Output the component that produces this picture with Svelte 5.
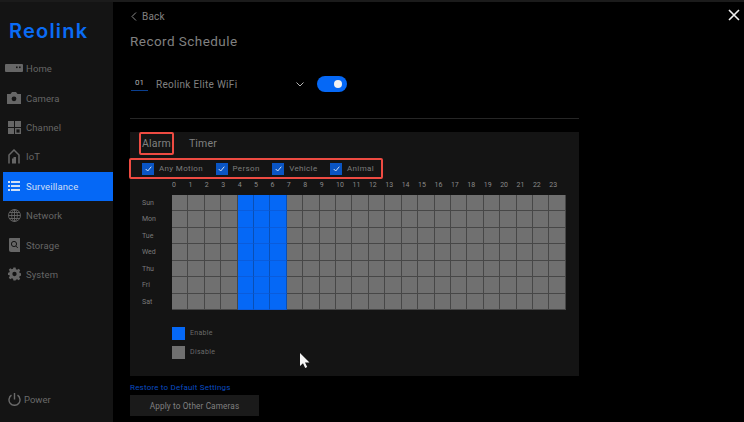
<script>
    const navItems = ['Home', 'Camera', 'Channel', 'IoT', 'Surveillance', 'Network', 'Storage', 'System'];
    const filters = ['Any Motion', 'Person', 'Vehicle', 'Animal'];
    const days = ['Sun', 'Mon', 'Tue', 'Wed', 'Thu', 'Fri', 'Sat'];
    const hours = Array.from({ length: 24 }, (_, i) => i);

    // 4 to 6 o'clock are enabled on every day
    const isOn = (h) => h >= 4 && h <= 6;
</script>

<div class="screen">
    <aside class="sidebar">
        <div class="logo">Reolink</div>
        <nav>
            {#each navItems as item}
                <div class="nav-item" class:active={item === 'Surveillance'}>
                    <span class="nav-icon">
                        {#if item === 'Home'}
                            <svg width="18" height="9" viewBox="0 0 18 9"><path d="M1 0h16a1 1 0 0 1 1 1v6a1 1 0 0 1-1 1H1a1 1 0 0 1-1-1V1a1 1 0 0 1 1-1z" fill="currentColor"/><rect x="11" y="2.500" width="1.600" height="1.600" fill="#141414"/><rect x="14" y="2.500" width="1.600" height="1.600" fill="#141414"/></svg>
                        {:else if item === 'Camera'}
                            <svg width="14" height="12" viewBox="0 0 14 12"><path d="M0 2h3.500L5 0h4l1.500 2H14v10H0z" fill="currentColor"/><circle cx="7" cy="6.800" r="2.400" fill="#141414"/></svg>
                        {:else if item === 'Channel'}
                            <svg width="13" height="13" viewBox="0 0 13 13"><rect width="6" height="6" fill="currentColor"/><rect x="7" width="6" height="6" fill="currentColor"/><rect y="7" width="6" height="6" fill="currentColor"/><rect x="7.700" y="7.700" width="4.600" height="4.600" fill="none" stroke="currentColor" stroke-width="1.400"/></svg>
                        {:else if item === 'IoT'}
                            <svg width="12" height="15" viewBox="0 0 12 15"><path d="M1 14.500V6l5-5 5 5v8.500" fill="none" stroke="currentColor" stroke-width="1.500"/><path d="M4 14.500V9.500h1.500V8H8v6.500z" fill="currentColor"/></svg>
                        {:else if item === 'Surveillance'}
                            <svg width="12" height="10" viewBox="0 0 12 10"><g fill="currentColor"><rect width="2" height="2"/><rect x="3" width="9" height="2"/><rect y="4" width="2" height="2"/><rect x="3" y="4" width="9" height="2"/><rect y="8" width="2" height="2"/><rect x="3" y="8" width="9" height="2"/></g></svg>
                        {:else if item === 'Network'}
                            <svg width="13" height="13" viewBox="0 0 13 13" fill="none" stroke="currentColor" stroke-width="0.900"><circle cx="6.500" cy="6.500" r="6"/><ellipse cx="6.500" cy="6.500" rx="2.800" ry="6"/><path d="M6.500 .5v12M.5 6.500h12M1.400 3.500h10.200M1.400 9.500h10.200"/></svg>
                        {:else if item === 'Storage'}
                            <svg width="11" height="14" viewBox="0 0 11 14"><path d="M1 0h10v14H2a2 2 0 0 1-2-2V1a1 1 0 0 1 1-1z" fill="currentColor"/><circle cx="5" cy="6" r="2.600" fill="none" stroke="#141414" stroke-width="1"/><path d="M6.800 8l2 2" stroke="#141414" stroke-width="1"/></svg>
                        {:else}
                            <svg width="13" height="14" viewBox="0 0 24 24"><path fill="currentColor" fill-rule="evenodd" d="M10 0h4l.7 3.400 2.200.9 2.900-1.900 2.800 2.800-1.900 2.900.9 2.200 3.400.7v4l-3.400.7-.9 2.200 1.900 2.900-2.800 2.800-2.900-1.900-2.200.9L14 24h-4l-.7-3.400-2.200-.9-2.900 1.900-2.800-2.800 1.900-2.900-.9-2.200L-1 14v-4l3.400-.7.9-2.200-1.900-2.900 2.800-2.800 2.900 1.900 2.200-.9zM12 8a4 4 0 1 0 0 8 4 4 0 0 0 0-8z"/></svg>
                        {/if}
                    </span>
                    <span>{item}</span>
                </div>
            {/each}
        </nav>
        <div class="power">
            <svg width="13" height="13" viewBox="0 0 13 13" fill="none" stroke="currentColor" stroke-width="1.400"><path d="M6.500 0v6.500"/><path d="M3.500 2.200a5.500 5.500 0 1 0 6 0"/></svg>
            <span>Power</span>
        </div>
    </aside>

    <main>
        <div class="back">
            <svg width="6" height="9" viewBox="0 0 6 9" fill="none" stroke="#8a8a8a" stroke-width="1"><path d="M5 .5 1 4.500l4 4"/></svg>
            <span>Back</span>
        </div>
        <h1>Record Schedule</h1>

        <div class="camera-row">
            <span class="channel">01</span>
            <span class="camera-name">Reolink Elite WiFi</span>
            <svg class="chevron" width="8" height="5" viewBox="0 0 8 5" fill="none" stroke="#b5b5b5" stroke-width="1"><path d="M.5.5 4 4 7.500.5"/></svg>
            <span class="toggle"><span class="knob"></span></span>
        </div>

        <div class="divider"></div>

        <section class="panel">
            <div class="tabs">
                <span class="tab alarm">Alarm</span>
                <span class="tab">Timer</span>
            </div>

            <div class="filters">
                {#each filters as f}
                    <div class="filter">
                        <span class="check">
                            <svg width="7" height="6" viewBox="0 0 7 6" fill="none" stroke="#cfe0f7" stroke-width="1"><path d="M.7 3l2 2L6.300.7"/></svg>
                        </span>
                        <span>{f}</span>
                    </div>
                {/each}
            </div>

            <div class="schedule">
                <div class="corner"></div>
                {#each hours as h}
                    <div class="hour">{h}</div>
                {/each}
                {#each days as d}
                    <div class="day">{d}</div>
                    {#each hours as h}
                        <div class="cell" class:on={isOn(h)}></div>
                    {/each}
                {/each}
            </div>

            <div class="legend">
                <div class="legend-row"><span class="swatch on"></span><span>Enable</span></div>
                <div class="legend-row"><span class="swatch"></span><span>Disable</span></div>
            </div>
        </section>

        <div class="restore">Restore to Default Settings</div>
        <button>Apply to Other Cameras</button>
    </main>

    <svg class="close" width="12" height="12" viewBox="0 0 12 12" stroke="#f0f0f0" stroke-width="1.600"><path d="M1 1l10 10M11 1 1 11"/></svg>
    <svg class="cursor" width="10" height="16" viewBox="0 0 10 16"><path d="M0 0v13l3-2.800L5.200 15l2-.9L5 9.500h4.500z" fill="#f5f5f5"/></svg>
</div>

<style>
    :global(body) {
        background: #000;
    }

    .screen {
        position: relative;
        display: flex;
        width: 744px;
        height: 422px;
        overflow: hidden;
        background: #000;
        border-top: 2px solid #1b1b1b;
        box-sizing: border-box;
        font-family: Roboto, "Liberation Sans", sans-serif;
    }

    .sidebar {
        display: flex;
        flex-direction: column;
        width: 113px;
        flex: none;
        background: #141414;
        padding-left: 3px;
        box-sizing: border-box;
    }

    .logo {
        height: 35px;
        margin: 17px 0 0 6px;
        color: #0a6cf5;
        font-family: Inter, sans-serif;
        font-size: 20px;
        font-weight: 600;
        line-height: 24px;
        letter-spacing: 1.200px;
    }

    nav {
        display: flex;
        flex-direction: column;
    }

    .nav-item {
        display: flex;
        align-items: center;
        height: 29.4px;
        color: #666;
        font-size: 9.500px;
        letter-spacing: 0.1px;
    }

    .nav-item.active {
        background: #0568f6;
        color: #cfdff5;
    }

    .nav-icon {
        display: flex;
        justify-content: center;
        width: 22px;
        margin-right: 1px;
    }

    .power {
        display: flex;
        align-items: center;
        gap: 3px;
        margin: auto 0 16px 5px;
        color: #6a6a6a;
        font-size: 9.500px;
    }

    main {
        display: flex;
        flex-direction: column;
        width: 449px;
        margin-left: 17px;
    }

    .back {
        display: flex;
        align-items: center;
        gap: 5px;
        margin-top: 7px;
        height: 14px;
        padding-left: 1px;
        color: #808080;
        font-size: 10px;
        letter-spacing: 0.2px;
    }

    h1 {
        margin: 9px 0 0;
        color: #808080;
        font-size: 13.500px;
        font-weight: 400;
        line-height: 18px;
        letter-spacing: 0.45px;
    }

    .camera-row {
        display: flex;
        align-items: center;
        height: 18px;
        margin-top: 25px;
    }

    .channel {
        width: 17px;
        margin-left: 1px;
        padding-bottom: 2px;
        border-bottom: 1px solid #0a3f90;
        color: #b0b0b0;
        font-size: 8px;
        line-height: 11px;
        text-align: center;
        box-sizing: border-box;
    }

    .camera-name {
        width: 140px;
        margin-left: 8px;
        color: #808080;
        font-size: 10px;
        letter-spacing: 0.3px;
    }

    .toggle {
        display: flex;
        align-items: center;
        justify-content: flex-end;
        width: 30px;
        height: 16px;
        margin-left: 13px;
        padding-right: 5px;
        border-radius: 8px;
        background: #0568f6;
        box-sizing: border-box;
    }

    .knob {
        width: 8px;
        height: 8px;
        border-radius: 50%;
        background: #f2f2f2;
    }

    .divider {
        height: 1px;
        margin-top: 25px;
        background: #262626;
    }

    .panel {
        height: 244px;
        margin-top: 13px;
        padding-left: 12px;
        background: #141414;
        box-sizing: border-box;
    }

    .tabs {
        display: flex;
        align-items: center;
        gap: 15px;
        height: 23px;
    }

    .tab {
        color: #808080;
        font-size: 10.500px;
        letter-spacing: 0.2px;
    }

    .alarm {
        margin-left: -3px;
        padding: 3px 1px;
        border: 2px solid #ee4b42;
        border-radius: 2px;
    }

    .filters {
        display: flex;
        align-items: center;
        width: 254px;
        height: 21px;
        margin: 3px 0 0 -13px;
        padding-left: 11px;
        border: 2px solid #ee4b42;
        border-radius: 2px;
        box-sizing: border-box;
        gap: 12.500px;
    }

    .filter {
        display: flex;
        align-items: center;
        gap: 5px;
        color: #7c7c7c;
        font-size: 8px;
        letter-spacing: 0.35px;
    }

    .check {
        display: flex;
        align-items: center;
        justify-content: center;
        width: 12px;
        height: 12px;
        background: #0a55c4;
    }

    .schedule {
        display: grid;
        grid-template-columns: 30px repeat(24, 16.42px);
        grid-template-rows: 15px repeat(7, 16.43px);
        margin-top: 1px;
    }

    .hour {
        color: #8a8a8a;
        font-size: 7px;
        line-height: 10px;
    }

    .day {
        padding-top: 3px;
        color: #7a7a7a;
        font-size: 7px;
        line-height: 10px;
    }

    .cell {
        background: #707070;
        border-right: 1px solid #474747;
        border-bottom: 1px solid #474747;
        box-sizing: border-box;
    }

    .cell.on {
        background: #0568f6;
        border-right-color: #0a4fb4;
        border-bottom-color: #0a5cdc;
    }

    .legend {
        display: flex;
        flex-direction: column;
        gap: 6px;
        margin: 17px 0 0 30px;
    }

    .legend-row {
        display: flex;
        align-items: center;
        gap: 5px;
        color: #6a6a6a;
        font-size: 7px;
        letter-spacing: 0.3px;
    }

    .swatch {
        width: 13px;
        height: 13px;
        background: #707070;
    }

    .swatch.on {
        background: #0568f6;
    }

    .restore {
        margin-top: 7px;
        color: #0a4cc0;
        font-size: 8px;
        line-height: 10px;
        letter-spacing: 0.2px;
    }

    button {
        width: 129px;
        height: 21px;
        margin-top: 2px;
        padding: 0;
        border: none;
        background: #1a1a1a;
        color: #808080;
        font-family: inherit;
        font-size: 8.200px;
        letter-spacing: 0.15px;
    }

    .close {
        position: absolute;
        top: 7px;
        left: 728px;
    }

    .cursor {
        position: absolute;
        top: 351px;
        left: 300px;
    }
</style>
